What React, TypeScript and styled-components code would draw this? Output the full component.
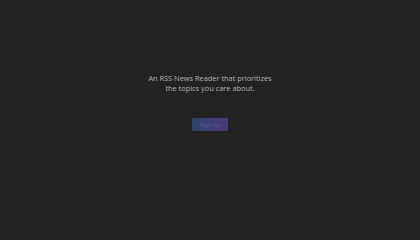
import React from "react";
import styled, { createGlobalStyle } from "styled-components";

const Global = createGlobalStyle`
  html, body { margin: 0; padding: 0; background: #222222; }
  body { font-family: "Open Sans", "Liberation Sans", sans-serif; }
`;

const Page = styled.main`
  width: 420px;
  height: 236px;
  display: flex;
  flex-direction: column;
  align-items: center;
  padding-top: 73px;
  box-sizing: border-box;
`;

const Tagline = styled.p`
  margin: 0;
  font-size: 7.4px;
  line-height: 10px;
  color: #b0b0b0;
  text-align: center;
`;

const SignUp = styled.button`
  margin-top: 25px;
  width: 36px;
  height: 13px;
  padding: 0;
  border: none;
  border-radius: 1px;
  background: linear-gradient(90deg, #2a466c 0%, #3d3d74 55%, #483878 100%);
  color: #50608e;
  font-family: inherit;
  font-size: 6px;
  cursor: pointer;
`;

export default function App() {
  return (
    <>
      <Global />
      <Page>
        <Tagline>
          An RSS News Reader that prioritizes
          <br />
          the topics you care about.
        </Tagline>
        <SignUp>Sign up</SignUp>
      </Page>
    </>
  );
}
